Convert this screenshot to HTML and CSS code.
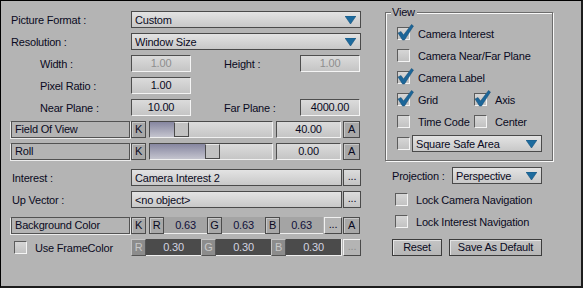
FILE: index.html
```html
<!DOCTYPE html>
<html lang="en">

<head>
  <meta charset="UTF-8">
  <meta name="viewport" content="width=device-width, initial-scale=1.0">
  <title>Camera Settings</title>
  <link rel="stylesheet" href="styles.css">
</head>

<body>
  <div class="window">
    <div class="left">
      <div class="row">
        <span class="label">Picture Format :</span>
        <div class="combo wide">Custom
          <svg class="arrow" width="11" height="8" viewBox="0 0 11 8"><polygon points="0,0 11,0 5.5,8" /></svg>
        </div>
      </div>
      <div class="row">
        <span class="label">Resolution :</span>
        <div class="combo wide">Window Size
          <svg class="arrow" width="11" height="8" viewBox="0 0 11 8"><polygon points="0,0 11,0 5.5,8" /></svg>
        </div>
      </div>
      <div class="row">
        <span class="label indent">Width :</span>
        <div class="field off">1.00</div>
        <span class="label2">Height :</span>
        <div class="field off">1.00</div>
      </div>
      <div class="row">
        <span class="label indent">Pixel Ratio :</span>
        <div class="field">1.00</div>
      </div>
      <div class="row">
        <span class="label indent">Near Plane :</span>
        <div class="field">10.00</div>
        <span class="label2">Far Plane :</span>
        <div class="field">4000.00</div>
      </div>
      <div class="row">
        <div class="tag">Field Of View</div>
        <div class="key">K</div>
        <div class="slider">
          <div class="fill" style="width: 24px"></div>
          <div class="thumb"></div>
        </div>
        <div class="field value">40.00</div>
        <div class="key anim">A</div>
      </div>
      <div class="row">
        <div class="tag">Roll</div>
        <div class="key">K</div>
        <div class="slider">
          <div class="fill" style="width: 55px"></div>
          <div class="thumb"></div>
        </div>
        <div class="field value">0.00</div>
        <div class="key anim">A</div>
      </div>
      <div class="row spaced">
        <span class="label plain">Interest :</span>
        <div class="combo text">Camera Interest 2</div>
        <div class="dots">...</div>
      </div>
      <div class="row">
        <span class="label plain">Up Vector :</span>
        <div class="combo text">&lt;no object&gt;</div>
        <div class="dots">...</div>
      </div>
      <div class="row spaced">
        <div class="tag">Background Color</div>
        <div class="key">K</div>
        <div class="color">
          <div class="channel"><span class="key small">R</span><span class="num">0.63</span></div>
          <div class="channel"><span class="key small">G</span><span class="num">0.63</span></div>
          <div class="channel"><span class="key small">B</span><span class="num">0.63</span></div>
        </div>
        <div class="dots light">...</div>
        <div class="key anim">A</div>
      </div>
      <div class="row">
        <div class="label check-label">
          <span class="check"></span>
          <span>Use FrameColor</span>
        </div>
        <div class="color dark">
          <div class="channel"><span class="key off">R</span><span class="num">0.30</span></div>
          <div class="channel"><span class="key off">G</span><span class="num">0.30</span></div>
          <div class="channel"><span class="key off">B</span><span class="num">0.30</span></div>
        </div>
        <div class="dots disabled">...</div>
      </div>
    </div>

    <div class="right">
      <div class="group">
        <span class="group-title">View</span>
        <div class="opt">
          <span class="check on"><svg class="tick" width="17" height="17" viewBox="0 0 17 17"><polygon points="1,9 4,7.5 6.5,11 14.5,0.5 16.5,2 7.5,16 5.5,16" /></svg></span>
          <span class="opt-text">Camera Interest</span>
        </div>
        <div class="opt">
          <span class="check"></span>
          <span class="opt-text">Camera Near/Far Plane</span>
        </div>
        <div class="opt">
          <span class="check on"><svg class="tick" width="17" height="17" viewBox="0 0 17 17"><polygon points="1,9 4,7.5 6.5,11 14.5,0.5 16.5,2 7.5,16 5.5,16" /></svg></span>
          <span class="opt-text">Camera Label</span>
        </div>
        <div class="opt">
          <div class="pair">
            <span class="check on"><svg class="tick" width="17" height="17" viewBox="0 0 17 17"><polygon points="1,9 4,7.5 6.5,11 14.5,0.5 16.5,2 7.5,16 5.5,16" /></svg></span>
            <span class="opt-text">Grid</span>
          </div>
          <span class="check on"><svg class="tick" width="17" height="17" viewBox="0 0 17 17"><polygon points="1,9 4,7.5 6.5,11 14.5,0.5 16.5,2 7.5,16 5.5,16" /></svg></span>
          <span class="opt-text">Axis</span>
        </div>
        <div class="opt">
          <div class="pair">
            <span class="check"></span>
            <span class="opt-text">Time Code</span>
          </div>
          <span class="check"></span>
          <span class="opt-text">Center</span>
        </div>
        <div class="opt">
          <span class="check"></span>
          <div class="combo safe">Square Safe Area
            <svg class="arrow" width="11" height="8" viewBox="0 0 11 8"><polygon points="0,0 11,0 5.5,8" /></svg>
          </div>
        </div>
      </div>

      <div class="row projection">
        <span class="proj-label">Projection :</span>
        <div class="combo proj">Perspective
          <svg class="arrow" width="11" height="8" viewBox="0 0 11 8"><polygon points="0,0 11,0 5.5,8" /></svg>
        </div>
      </div>
      <div class="row lock">
        <span class="check"></span>
        <span class="opt-text">Lock Camera Navigation</span>
      </div>
      <div class="row lock second">
        <span class="check"></span>
        <span class="opt-text">Lock Interest Navigation</span>
      </div>
      <div class="row buttons">
        <div class="button reset">Reset</div>
        <div class="button save">Save As Default</div>
      </div>
    </div>
  </div>
</body>
</html>
```

FILE: styles.css
```css
body {
  margin: 0;
}
.window {
  width: 583px;
  height: 288px;
  box-sizing: border-box;
  border-top: 1px solid #000;
  border-left: 1px solid #000;
  border-right: 2px solid #1c1c1c;
  border-bottom: 2px solid #1c1c1c;
  background-color: #b4b4b4;
  padding: 10px 0 0 10px;
  display: flex;
  gap: 24px;
  font-family: "Liberation Sans", Arial, sans-serif;
  font-size: 11px;
  letter-spacing: -0.2px;
  color: #0a0a22;
}
.left {
  width: 350px;
  display: flex;
  flex-direction: column;
  gap: 5px;
}
.row {
  display: flex;
  align-items: center;
  height: 17px;
}
.row.spaced {
  margin-top: 4px;
}
.label {
  width: 120px;
  flex: none;
  box-sizing: border-box;
}
.label.indent {
  padding-left: 29px;
}
.label.plain {
  padding-left: 1px;
}
.label2 {
  width: 76px;
  margin-left: 33px;
}

/* drop downs and text boxes */
.combo {
  height: 17px;
  box-sizing: border-box;
  border: 1px solid #4a4a4a;
  background: linear-gradient(#e3e3e3, #c8c8c8);
  display: flex;
  align-items: center;
  justify-content: space-between;
  padding: 0 4px 0 3px;
  white-space: nowrap;
}
.combo.wide {
  width: 230px;
}
.combo.text {
  width: 211px;
}
.arrow polygon {
  fill: #1d6b9e;
  stroke: #14507a;
  stroke-width: 0.6;
}
.field {
  width: 60px;
  height: 17px;
  box-sizing: border-box;
  border-style: solid;
  border-width: 1px;
  border-color: #4e4e4e #f4f4f4 #f4f4f4 #4e4e4e;
  background: linear-gradient(#dbdbdb, #c5c5c5);
  text-align: center;
  line-height: 15px;
}
.field.off {
  color: #8e8e8e;
}
.field.value {
  width: 65px;
  margin-right: 2px;
}

/* spinner rows */
.tag {
  width: 119px;
  height: 17px;
  box-sizing: border-box;
  border: 1px solid #525252;
  box-shadow: -1px 1px 0 #ececec, 1px 1px 0 #ececec;
  padding-left: 3px;
  line-height: 15px;
  margin-right: 1px;
}
.key {
  width: 15px;
  height: 17px;
  flex: none;
  box-sizing: border-box;
  border: 1px solid #4c4c4c;
  background-color: #a8a8a8;
  box-shadow: inset 1px 1px 0 #c8c8c8;
  text-align: center;
  line-height: 15px;
  margin-right: 3px;
}
.key.anim {
  width: 17px;
  margin-right: 0;
}
.slider {
  width: 124px;
  height: 17px;
  box-sizing: border-box;
  display: flex;
  border-style: solid;
  border-width: 1px;
  border-color: #4a4a4a #f0f0f0 #f0f0f0 #4a4a4a;
  background: linear-gradient(#dcdcdc, #c6c6c6);
  margin-right: 3px;
}
.fill {
  background: linear-gradient(#8686a0, #c4c4ce);
}
.thumb {
  width: 15px;
  box-sizing: border-box;
  border: 1px solid #4a4a4a;
  border-top-color: #e8e8e8;
  background-color: #c2c2c2;
}
.dots {
  width: 18px;
  height: 17px;
  box-sizing: border-box;
  margin-left: 1px;
  border: 1px solid #4a4a4a;
  background: linear-gradient(#dcdcdc, #c4c4c4);
  text-align: center;
  line-height: 13px;
}
.dots.light {
  margin-left: 1px;
  margin-right: 1px;
  border-color: #f0f0f0 #4a4a4a #4a4a4a #f0f0f0;
  background: #b4b4b4;
}
.dots.disabled {
  color: #8e8e8e;
  background: #b4b4b4;
  border-color: #f0f0f0 #4a4a4a #4a4a4a #f0f0f0;
}

/* colour swatch row */
.color {
  width: 174px;
  height: 17px;
  box-sizing: border-box;
  display: flex;
  background-color: #a4a4a4;
  border-bottom: 1px solid #eeeeee;
}
.channel {
  flex: 1;
  display: flex;
}
.key.small {
  margin-right: 0;
}
.num {
  flex: 1;
  text-align: center;
  line-height: 16px;
  color: #10103a;
}
.color.dark {
  width: 211px;
  background-color: #4b4b4b;
  border-right: 1px solid #eeeeee;
}
.key.off {
  margin-right: 0;
  background-color: #8c8c8c;
  border-color: #c4c4c4 #555 #555 #c4c4c4;
  box-shadow: none;
  color: #c8c8c8;
}
.color.dark .num {
  color: #d4d4e0;
}
.check-label {
  display: flex;
  align-items: center;
  gap: 8px;
  padding-left: 3px;
}

/* checkboxes */
.check {
  width: 13px;
  height: 13px;
  flex: none;
  box-sizing: border-box;
  border-style: solid;
  border-width: 1px;
  border-color: #5c5c5c #f4f4f4 #f4f4f4 #5c5c5c;
  background: linear-gradient(#d6d6d6, #c2c2c2);
  position: relative;
}
.tick {
  position: absolute;
  left: -1px;
  top: -4px;
}
.tick polygon {
  fill: #1c6699;
  stroke: #124a72;
  stroke-width: 0.5;
}

/* right side */
.right {
  width: 168px;
  display: flex;
  flex-direction: column;
}
.group {
  margin-top: 1px;
  border: 1px solid #6c6c6c;
  box-shadow: inset 1px 1px 0 #f8f8f8, 1px 1px 0 #f8f8f8;
  position: relative;
  padding: 12px 0 8px 11px;
  display: flex;
  flex-direction: column;
  gap: 5px;
}
.group-title {
  position: absolute;
  top: -7px;
  left: 5px;
  padding: 0 2px 0 1px;
  background-color: #b4b4b4;
}
.opt {
  display: flex;
  align-items: center;
  height: 17px;
}
.opt-text {
  margin-left: 8px;
  white-space: nowrap;
}
.pair {
  width: 77px;
  display: flex;
  align-items: center;
}
.combo.safe {
  width: 130px;
  margin-left: 2px;
}
.projection {
  margin-top: 6px;
}
.proj-label {
  width: 67px;
  padding-left: 7px;
  box-sizing: border-box;
}
.combo.proj {
  width: 90px;
}
.lock {
  margin-top: 7px;
  padding-left: 10px;
}
.lock.second {
  margin-top: 5px;
}
.buttons {
  margin-top: 9px;
}
.button {
  height: 17px;
  box-sizing: border-box;
  border: 1px solid #3c3c3c;
  background: linear-gradient(#c4c4c4, #b6b6b6);
  box-shadow: inset 1px 1px 0 #e4e4e4;
  text-align: center;
  line-height: 15px;
  margin-left: 7px;
}
.reset {
  width: 50px;
}
.save {
  width: 93px;
}
```
